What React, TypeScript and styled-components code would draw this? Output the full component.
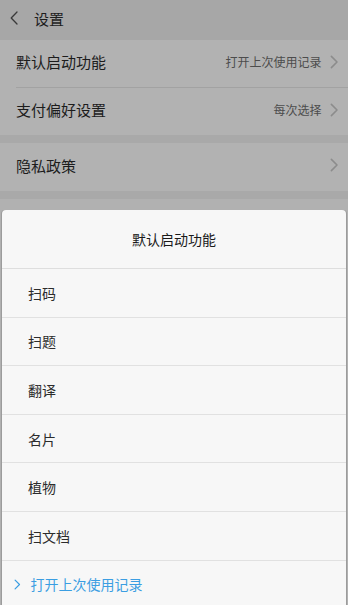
import React from "react";
import styled, { createGlobalStyle } from "styled-components";

const Global = createGlobalStyle`
  html, body { margin: 0; padding: 0; }
  body {
    background: #b1b1b1;
    font-family: "Noto Sans CJK SC", "Noto Sans", sans-serif;
    width: 348px;
    height: 605px;
    overflow: hidden;
  }
`;

const Page = styled.div`
  position: relative;
  width: 348px;
  height: 605px;
  background: #b1b1b1;
  overflow: hidden;
`;

const Header = styled.div`
  height: 40px;
  display: flex;
  align-items: center;
  background: #a7a7a7;
  padding-left: 10px;
  gap: 16px;
  padding-bottom: 4px;
  box-sizing: border-box;
`;

const HeaderTitle = styled.span`
  font-size: 15px;
  color: #1e1e1e;
`;

const Section = styled.div`
  background: #b2b2b2;
  border-bottom: 8px solid #a9a9a9;
`;

const Row = styled.div<{ $divider?: boolean }>`
  height: 47.5px;
  margin-left: 16px;
  padding-right: 10px;
  padding-bottom: 3px;
  display: flex;
  align-items: center;
  border-bottom: ${(p) => (p.$divider ? "1px solid #a2a2a2" : "none")};
  box-sizing: border-box;
`;

const RowLabel = styled.span`
  flex: 1;
  font-size: 15px;
  color: #1c1c1c;
`;

const RowValue = styled.span`
  font-size: 12px;
  color: #4c4c4c;
  margin-right: 8px;
`;

const Sheet = styled.div`
  position: absolute;
  top: 210px;
  left: 2px;
  right: 2px;
  height: 400px;
  background: #f7f7f7;
  border-radius: 4px 4px 0 0;
  box-shadow: -1px 0 0 #9c9c9c, 1px 0 0 #9c9c9c;
`;

const SheetTitle = styled.div`
  height: 59px;
  display: flex;
  align-items: center;
  justify-content: center;
  font-size: 14px;
  color: #1a1a1a;
  border-bottom: 1px solid #dedede;
  box-sizing: border-box;
`;

const Item = styled.div<{ $selected?: boolean }>`
  height: 48.6px;
  display: flex;
  align-items: center;
  padding-left: ${(p) => (p.$selected ? "12px" : "26px")};
  gap: 10px;
  font-size: 14px;
  color: ${(p) => (p.$selected ? "#3b9ee2" : "#2c2c2c")};
  border-bottom: 1px solid #e1e1e1;
  box-sizing: border-box;
`;

const Chevron = ({ color, size = 10 }: { color: string; size?: number }) => (
  <svg width={size * 0.6} height={size} viewBox="0 0 6 10" fill="none">
    <path d="M1 1 L5 5 L1 9" stroke={color} strokeWidth="1.1" strokeLinecap="round" strokeLinejoin="round" />
  </svg>
);

const BackIcon = () => (
  <svg width="8" height="14" viewBox="0 0 8 14" fill="none">
    <path d="M7 1 L1.2 7 L7 13" stroke="#3a3a3a" strokeWidth="1.3" strokeLinecap="round" strokeLinejoin="round" />
  </svg>
);

const options = ["扫码", "扫题", "翻译", "名片", "植物", "扫文档"];

export default function App() {
  return (
    <>
      <Global />
      <Page>
        <Header>
          <BackIcon />
          <HeaderTitle>设置</HeaderTitle>
        </Header>
        <Section>
          <Row $divider>
            <RowLabel>默认启动功能</RowLabel>
            <RowValue>打开上次使用记录</RowValue>
            <Chevron color="#8c8c8c" size={14} />
          </Row>
          <Row>
            <RowLabel>支付偏好设置</RowLabel>
            <RowValue>每次选择</RowValue>
            <Chevron color="#8c8c8c" size={14} />
          </Row>
        </Section>
        <Section>
          <Row>
            <RowLabel>隐私政策</RowLabel>
            <Chevron color="#8c8c8c" size={14} />
          </Row>
        </Section>
        <Sheet>
          <SheetTitle>默认启动功能</SheetTitle>
          {options.map((o) => (
            <Item key={o}>{o}</Item>
          ))}
          <Item $selected>
            <Chevron color="#3b9ee2" size={11} />
            打开上次使用记录
          </Item>
        </Sheet>
      </Page>
    </>
  );
}
